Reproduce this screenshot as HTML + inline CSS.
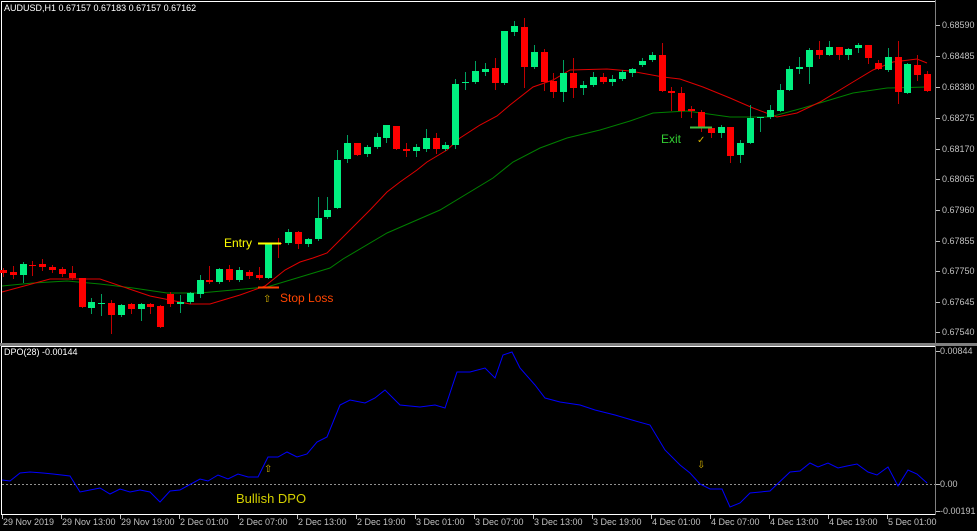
<!DOCTYPE html>
<html><head><meta charset="utf-8"><style>
html,body{margin:0;padding:0;background:#000;width:977px;height:531px;overflow:hidden}
svg{display:block}
text{font-family:"Liberation Sans",sans-serif}
</style></head><body>
<svg id="s" width="977" height="531" viewBox="0 0 977 531" xmlns="http://www.w3.org/2000/svg">
<rect width="977" height="531" fill="#000"/>
<g id="c"></g>
</svg>
<script>
var NS="http://www.w3.org/2000/svg",g=document.getElementById('c');
function el(t,a,txt){var e=document.createElementNS(NS,t);for(var k in a)e.setAttribute(k,a[k]);if(txt!=null)e.textContent=txt;g.appendChild(e);return e;}
// frame
el('rect',{x:1.5,y:1.5,width:934,height:342,fill:'none',stroke:'#fff','stroke-width':1});
el('rect',{x:0,y:343,width:977,height:3,fill:'#808080'});
el('rect',{x:1.5,y:346.5,width:934,height:168,fill:'none',stroke:'#fff','stroke-width':1});
el('line',{x1:935.5,y1:0,x2:935.5,y2:515,stroke:'#808080'});
// MAs
function pl(pts,col){el('polyline',{points:pts.map(function(p){return p.join(',')}).join(' '),fill:'none',stroke:col,'stroke-width':1});}
pl([[2,286],[33,283],[67,281],[100,284],[133,288],[167,293],[200,293],[233,290],[267,287],[330,268],[343,259],[387,233],[440,210],[493,178],[513,162],[540,148],[567,138],[600,130],[630,121],[653,113],[687,111],[730,117],[770,117],[803,108],[853,93],[887,88],[927,87]],'#008000');
pl([[2,292],[50,279],[100,279],[150,296],[190,304],[210,304],[240,295],[265,286],[285,270],[300,262],[313,258],[327,253],[343,237],[370,210],[387,192],[400,182],[417,170],[427,162],[447,150],[460,138],[480,125],[497,116],[510,105],[533,87],[553,80],[570,70],[607,69],[630,71],[663,77],[680,79],[703,87],[730,98],[753,108],[777,117],[797,113],[820,102],[853,82],[873,70],[893,62],[917,59],[927,63]],'#e00000');
// candles: [top,bottom,wickTop,wickBot,green]
var C=[[270,273,268,276,0],[272,275,266,278,0],[264,275,262,282,1],[265,266,261,275,0],[264,267,259,270,0],[267,270,265,272,0],[269,274,267,276,0],[273,278,266,279,0],[278,307,278,307,0],[302,308,298,313,1],[303,304,294,315,1],[303,315,300,333,0],[305,315,304,316,1],[304,309,303,313,0],[304,309,303,320,1],[304,307,303,313,0],[306,327,305,327,0],[294,304,292,306,0],[302,304,295,312,1],[293,302,292,303,1],[280,294,275,297,1],[280,282,266,283,0],[269,282,268,283,1],[269,280,265,281,0],[270,280,267,281,1],[272,276,270,278,0],[275,278,267,279,0],[243,278,243,278,1],[243,244,238,257,0],[232,243,229,244,1],[232,244,231,248,0],[239,244,238,246,1],[218,239,197,240,1],[210,217,197,218,1],[160,208,150,208,1],[143,159,135,162,1],[143,155,143,155,0],[147,154,145,156,1],[137,147,133,148,1],[125,138,125,142,1],[126,149,126,149,0],[149,151,143,156,0],[147,151,144,156,1],[138,149,129,151,1],[138,149,133,153,0],[145,149,142,150,1],[84,145,79,148,1],[82,83,72,89,1],[71,82,61,83,1],[69,72,63,75,1],[68,83,58,89,0],[31,83,31,84,1],[26,32,21,35,1],[27,67,18,87,0],[52,67,45,68,1],[52,82,49,90,0],[81,92,73,97,0],[73,92,60,101,1],[73,88,58,97,0],[85,88,81,94,1],[77,85,72,86,1],[77,82,73,83,0],[79,82,75,85,1],[72,79,70,80,1],[69,73,68,76,1],[61,65,58,66,1],[55,60,52,61,1],[55,91,43,91,0],[91,93,87,110,0],[93,111,87,117,0],[109,111,106,117,0],[112,127,110,131,0],[128,133,127,137,0],[127,133,125,137,1],[127,156,127,162,0],[143,155,140,162,1],[118,143,105,143,1],[117,118,118,131,1],[110,117,105,118,1],[90,111,84,111,1],[69,90,66,90,1],[67,69,57,73,1],[50,67,48,83,1],[50,55,41,58,0],[47,55,41,55,1],[47,55,47,59,0],[49,55,48,59,1],[45,48,43,52,1],[45,58,45,63,0],[63,69,60,69,0],[57,70,48,71,1],[57,92,41,103,0],[64,93,63,93,1],[65,75,55,80,0],[74,91,71,91,0]];
for(var i=0;i<C.length;i++){var c=C[i],x=Math.round(3+i*9.83),col=c[4]?'#00f080':'#ff0000';
el('line',{x1:x+.5,y1:c[2],x2:x+.5,y2:c[3]+1,stroke:c[4]?'#00a060':'#c00000'});
var h=Math.max(1,c[1]-c[0]);el('rect',{x:x-3,y:c[0],width:7,height:h,fill:col});}
// annotations
el('line',{x1:258,y1:243.5,x2:281,y2:243.5,stroke:'#ffff00','stroke-width':2});
el('line',{x1:258,y1:287.5,x2:279,y2:287.5,stroke:'#ff4000','stroke-width':2});
el('text',{x:224,y:247,fill:'#ffff00','font-size':12},'Entry');
el('text',{x:280,y:302,fill:'#ff4500','font-size':12},'Stop Loss');
el('text',{x:263,y:302,fill:'#d4b000','font-size':10},'⇧');
el('line',{x1:690,y1:127.5,x2:712,y2:127.5,stroke:'#40c040','stroke-width':2});
el('text',{x:661,y:143,fill:'#32cd32','font-size':12},'Exit');
el('text',{x:697,y:143,fill:'#d4b000','font-size':10},'✓');
// top-left labels
el('text',{x:4,y:11,fill:'#fff','font-size':9},'AUDUSD,H1  0.67157 0.67183 0.67157 0.67162');
el('text',{x:4,y:355,fill:'#fff','font-size':9},'DPO(28) -0.00144');
// price axis
var P=[['0.68590',25],['0.68485',56],['0.68380',87],['0.68275',118],['0.68170',149],['0.68065',179],['0.67960',210],['0.67855',241],['0.67750',271],['0.67645',302],['0.67540',332]];
P.forEach(function(p){el('line',{x1:936,y1:p[1]+.5,x2:940,y2:p[1]+.5,stroke:'#c0c0c0'});el('text',{x:942,y:p[1]+3,fill:'#c0c0c0','font-size':9},p[0]);});
[['0.00844',351],['0.00',484],['-0.00191',511]].forEach(function(p){el('line',{x1:936,y1:p[1]+.5,x2:940,y2:p[1]+.5,stroke:'#c0c0c0'});el('text',{x:940,y:p[1]+3,fill:'#c0c0c0','font-size':9},p[0]);});
// time axis
var T=['29 Nov 2019','29 Nov 13:00','29 Nov 19:00','2 Dec 01:00','2 Dec 07:00','2 Dec 13:00','2 Dec 19:00','3 Dec 01:00','3 Dec 07:00','3 Dec 13:00','3 Dec 19:00','4 Dec 01:00','4 Dec 07:00','4 Dec 13:00','4 Dec 19:00','5 Dec 01:00'];
T.forEach(function(t,i){var x=2+i*59;el('line',{x1:x+.5,y1:515,x2:x+.5,y2:519,stroke:'#c0c0c0'});el('text',{x:x+1,y:525,fill:'#c0c0c0','font-size':9},t);});
// zero line
el('line',{x1:2,y1:484.5,x2:935,y2:484.5,stroke:'#909090','stroke-dasharray':'2,2'});
pl([[2,480],[10,481],[20,473],[30,472],[43,473],[53,474],[70,476],[80,492],[90,490],[100,488],[110,494],[120,489],[130,492],[140,490],[150,492],[160,502],[170,491],[180,490],[200,479],[208,481],[218,475],[228,479],[238,474],[248,477],[258,477],[268,457],[278,457],[287,452],[297,457],[307,454],[317,442],[327,437],[340,405],[350,400],[365,403],[375,398],[385,390],[400,405],[420,407],[435,405],[445,408],[450,393],[457,372],[470,372],[485,368],[495,378],[503,355],[512,352],[520,368],[535,385],[545,398],[560,402],[580,405],[595,410],[615,415],[632,420],[650,425],[665,450],[680,465],[690,473],[700,484],[710,489],[722,489],[730,507],[740,503],[750,493],[770,491],[790,472],[800,471],[810,463],[818,467],[828,463],[838,468],[847,466],[857,464],[868,472],[877,475],[888,467],[898,486],[908,470],[917,474],[927,483]],'#0000ff');
el('text',{x:236,y:503,fill:'#d4d000','font-size':13},'Bullish DPO');
el('text',{x:264,y:472,fill:'#d4b000','font-size':10},'⇧');
el('text',{x:697,y:468,fill:'#d4b000','font-size':10},'⇩');
</script>
</body></html>
